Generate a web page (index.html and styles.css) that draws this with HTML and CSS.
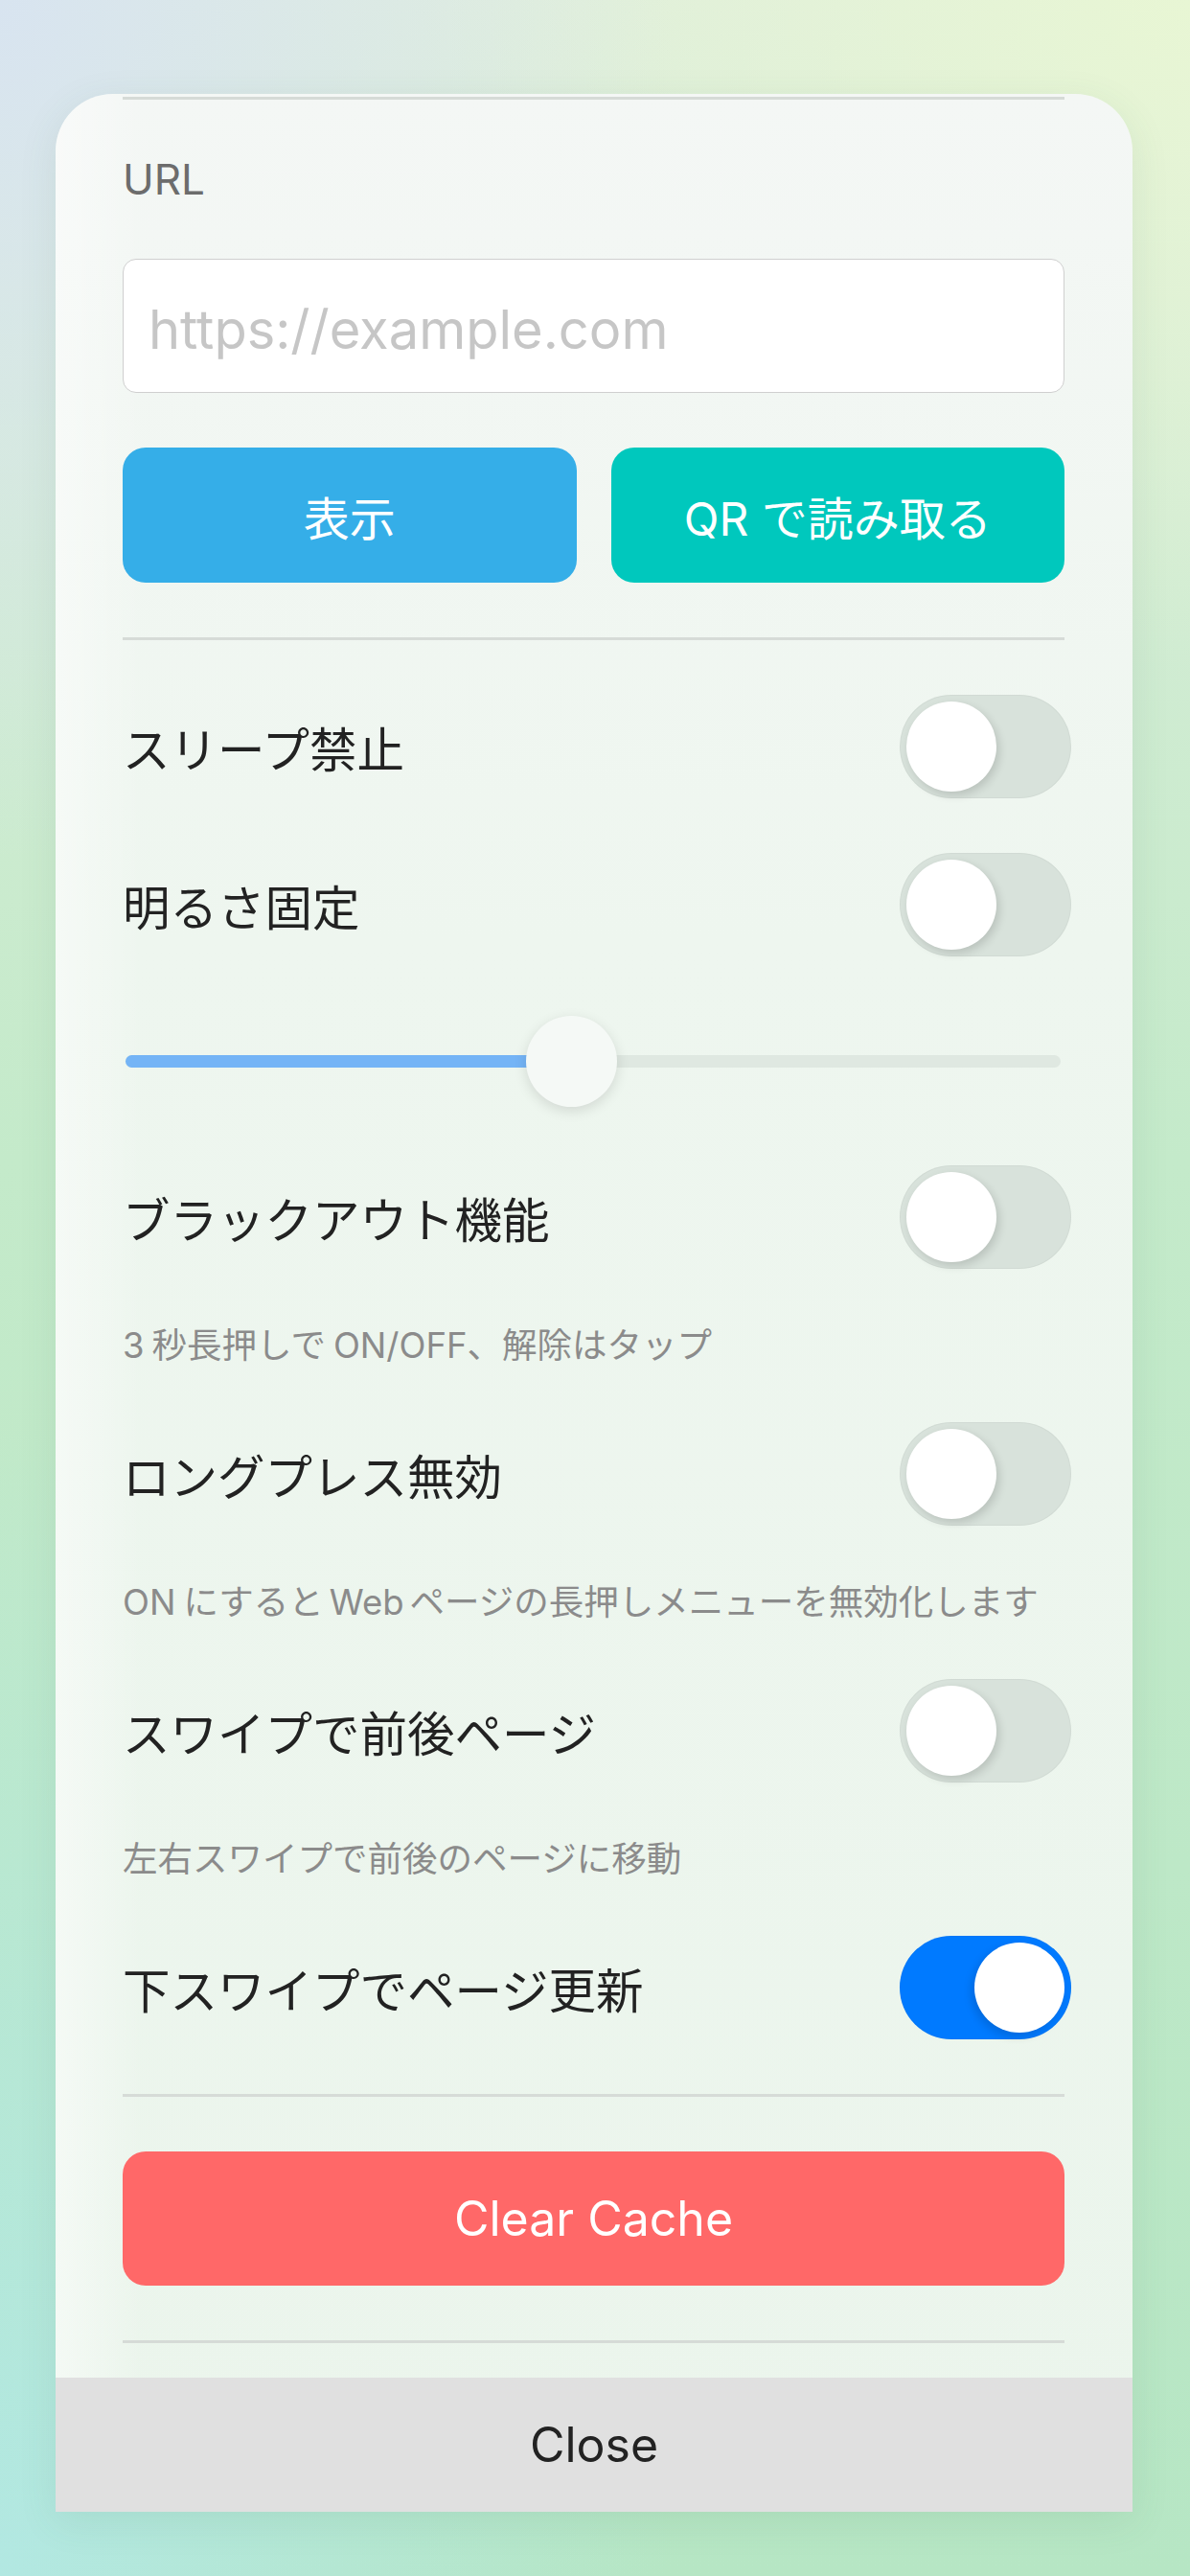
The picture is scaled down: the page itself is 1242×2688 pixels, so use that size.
FILE: index.html
```html
<!DOCTYPE html>
<html lang="ja">
<head>
    <meta charset="UTF-8">
    <meta name="viewport" content="width=device-width, initial-scale=1.0">
    <title>Settings</title>
    <link rel="stylesheet" href="styles.css">
</head>
<body>
    <!-- Settings sheet -->
    <div class="sheet">
        <div class="sheet-body">
            <hr class="divider">

            <label class="field-label" for="url">URL</label>
            <input class="url-input" id="url" type="text" placeholder="https://example.com">

            <div class="button-row">
                <button class="btn btn-show">表示</button>
                <button class="btn btn-qr">QR で読み取る</button>
            </div>

            <hr class="divider">

            <div class="setting">
                <span class="setting-label">スリープ禁止</span>
                <span class="switch"><span class="knob"></span></span>
            </div>

            <div class="setting">
                <span class="setting-label">明るさ固定</span>
                <span class="switch"><span class="knob"></span></span>
            </div>

            <!-- brightness slider -->
            <div class="slider">
                <div class="slider-track">
                    <div class="slider-fill" style="width: 47.6%"></div>
                    <div class="slider-thumb" style="left: 47.6%"></div>
                </div>
            </div>

            <div class="setting">
                <span class="setting-label">ブラックアウト機能</span>
                <span class="switch"><span class="knob"></span></span>
            </div>
            <p class="hint"><span class="latin first">3</span>秒長押しで<span class="latin last">ON/OFF</span>、解除はタップ</p>

            <div class="setting">
                <span class="setting-label">ロングプレス無効</span>
                <span class="switch"><span class="knob"></span></span>
            </div>
            <p class="hint"><span class="latin first">ON</span>にすると<span class="latin">Web</span>ページの長押しメニューを無効化します</p>

            <div class="setting">
                <span class="setting-label">スワイプで前後ページ</span>
                <span class="switch"><span class="knob"></span></span>
            </div>
            <p class="hint">左右スワイプで前後のページに移動</p>

            <div class="setting">
                <span class="setting-label">下スワイプでページ更新</span>
                <span class="switch on"><span class="knob"></span></span>
            </div>

            <hr class="divider">

            <button class="btn btn-clear">Clear Cache</button>

            <hr class="divider">
        </div>

        <button class="close-bar">Close</button>
    </div>
</body>
</html>
```

FILE: styles.css
```css
html, body {
    margin: 0;
    padding: 0;
}
body {
    width: 1242px;
    height: 2688px;
    overflow: hidden;
    font-family: "Inter", "Noto Sans CJK JP", sans-serif;
    color: #1f1f1f;
    background:
        radial-gradient(ellipse 700px 900px at 0 0, rgba(216, 228, 240, 1) 0%, rgba(216, 228, 240, 0) 100%),
        radial-gradient(ellipse 800px 700px at 100% 0, rgba(232, 246, 212, 1) 0%, rgba(232, 246, 212, 0) 100%),
        radial-gradient(ellipse 700px 1200px at 0 100%, rgba(178, 232, 226, 1) 0%, rgba(178, 232, 226, 0) 100%),
        linear-gradient(180deg, #dfeedc 0%, #c4eaca 45%, #b6e6c4 100%);
    padding-top: 98px;
    box-sizing: border-box;
}
.sheet {
    width: 1124px;
    margin-left: 58px;
    height: 2523px;
    border-radius: 60px 60px 0 0;
    overflow: hidden;
    background: linear-gradient(180deg, #f4f7f5 0%, #eef6ef 35%, #ebf5ec 100%);
    box-shadow: 0 10px 40px rgba(60, 110, 80, 0.10);
    display: flex;
    flex-direction: column;
}
.sheet-body {
    flex: 1;
    display: flex;
    flex-direction: column;
    gap: 57px;
    padding: 3px 71px 36px 70px;
    background: linear-gradient(90deg, rgba(255, 255, 255, 0.45) 0px, rgba(255, 255, 255, 0) 90px);
}
.divider {
    margin: 0;
    border: none;
    height: 3px;
    background: #d6dbd7;
}
.field-label {
    display: block;
    font-size: 44px;
    line-height: 52px;
    color: #6c6c6c;
}
.url-input {
    box-sizing: border-box;
    width: 100%;
    height: 140px;
    margin: 0;
    padding: 8px 26px 0;
    border: 1.5px solid #cfcfcf;
    border-radius: 14px;
    background: #fff;
    font-family: inherit;
    font-size: 56px;
    color: #222;
    outline: none;
}
.url-input::placeholder {
    color: #c6c6c6;
}
.button-row {
    display: flex;
    gap: 36px;
}
.btn {
    flex: 1;
    height: 141px;
    border: none;
    border-radius: 24px;
    color: #fff;
    font-family: inherit;
    font-size: 48px;
    cursor: pointer;
}
.btn-show {
    background: #35aee8;
}
.btn-qr {
    background: #00c8bd;
}
.btn-clear {
    flex: none;
    width: 100%;
    height: 140px;
    background: #ff6868;
    font-size: 50px;
}
.setting {
    display: flex;
    align-items: center;
    justify-content: space-between;
    height: 108px;
}
.setting-label {
    font-size: 49.5px;
    color: #222;
}
.switch {
    position: relative;
    width: 179px;
    height: 108px;
    margin-right: -7px;
    border-radius: 54px;
    background: #d8e2db;
    box-shadow: inset 0 0 0 1px rgba(0, 0, 0, 0.03);
}
.switch .knob {
    position: absolute;
    top: 7px;
    left: 7px;
    width: 94px;
    height: 94px;
    border-radius: 50%;
    background: #fff;
    box-shadow: 3px 4px 10px rgba(0, 0, 0, 0.14);
}
.switch.on {
    background: #007aff;
}
.switch.on .knob {
    left: 78px;
    box-shadow: -3px 4px 10px rgba(0, 0, 0, 0.14);
}
.slider {
    height: 104px;
    display: flex;
    align-items: center;
    padding: 0 4px 0 3px;
}
.slider-track {
    position: relative;
    flex: 1;
    height: 13px;
    border-radius: 7px;
    background: #dfe8e1;
}
.slider-fill {
    height: 100%;
    border-radius: 7px 0 0 7px;
    background: #74b4f6;
}
.slider-thumb {
    position: absolute;
    top: 50%;
    width: 95px;
    height: 95px;
    margin: -47px 0 0 -47px;
    border-radius: 50%;
    background: #f5f9f6;
    box-shadow: 0 4px 14px rgba(0, 0, 0, 0.12);
}
.hint {
    margin: 0;
    font-size: 36.5px;
    line-height: 46px;
    color: #8b8b8b;
}
.hint .latin {
    margin: 0 6px;
}
.hint .latin.first {
    margin: 0 8px 0 0;
}
.hint .latin.last {
    margin: 0 0 0 8px;
}
.close-bar {
    height: 140px;
    flex: none;
    border: none;
    background: #e0e0e0;
    font-family: inherit;
    font-size: 50px;
    color: #222;
}
```
